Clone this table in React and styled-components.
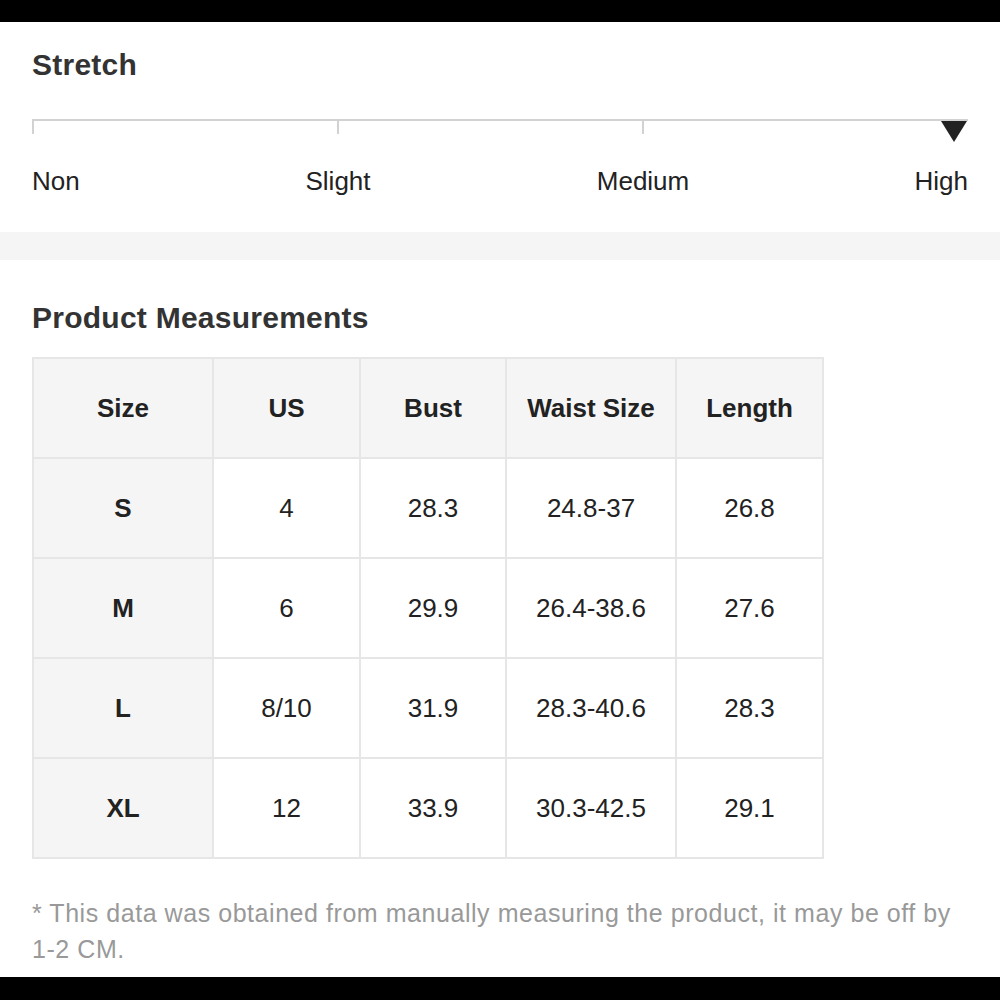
import React from 'react';
import styled, { createGlobalStyle } from 'styled-components';

const GlobalStyle = createGlobalStyle`
  body {
    margin: 0;
    background: #fff;
    font-family: "Liberation Sans", Arial, sans-serif;
  }
`;

const Page = styled.div`
  width: 1000px;
  height: 1000px;
  display: flex;
  flex-direction: column;
  overflow: hidden;
  background: #fff;
`;

const Bar = styled.div`
  height: ${(p) => p.$h}px;
  flex-shrink: 0;
  background: #000;
`;

const Section = styled.section`
  padding: ${(p) => p.$pad};
  flex: ${(p) => (p.$grow ? 1 : 'none')};
`;

const Title = styled.h2`
  margin: 0;
  font-size: 30px;
  line-height: 32px;
  font-weight: 700;
  letter-spacing: 0.25px;
  color: #333;
`;

const Scale = styled.div`
  margin-top: 38px;
  width: 936px;
  display: grid;
  grid-template-columns: 305px 305px 305px 21px;
  grid-template-rows: 15px 30px;
  row-gap: 32px;
`;

const TickCell = styled.div`
  border-top: 2px solid #d2d2d2;
  border-left: ${(p) => (p.$tick ? '2px solid #d2d2d2' : 'none')};
  display: flex;
  justify-content: flex-end;
`;

const Marker = styled.div`
  flex-shrink: 0;
  width: 0;
  height: 0;
  margin-right: 1px;
  border-left: 13px solid transparent;
  border-right: 13px solid transparent;
  border-top: 21px solid #222;
`;

const ScaleLabel = styled.div`
  grid-row: 2;
  grid-column: ${(p) => p.$col};
  justify-self: ${(p) => (p.$align === 'end' ? 'end' : 'start')};
  font-size: 26px;
  line-height: 30px;
  color: #222;
  white-space: nowrap;
  display: flex;
  justify-content: ${(p) => (p.$align === 'center' ? 'center' : 'flex-start')};
  width: ${(p) => (p.$align === 'center' ? '2px' : 'auto')};
`;

const Band = styled.div`
  height: 28px;
  flex-shrink: 0;
  background: #f5f5f5;
`;

const Table = styled.table`
  margin-top: 23px;
  border-collapse: collapse;
  table-layout: fixed;
  width: 790px;
  font-size: 26px;
  color: #222;
`;

const Cell = styled.td`
  height: 98px;
  padding: 0;
  text-align: center;
  border: 2px solid #e6e6e6;
  background: ${(p) => (p.$shade ? '#f5f5f5' : '#fff')};
  font-weight: ${(p) => (p.$bold ? 700 : 400)};
`;

const Note = styled.p`
  margin: 36px 0 0;
  width: 936px;
  font-size: 25px;
  line-height: 36px;
  letter-spacing: 0.55px;
  color: #999;
`;

const columns = [180, 147, 146, 170, 147];
const head = ['Size', 'US', 'Bust', 'Waist Size', 'Length'];
const rows = [
  ['S', '4', '28.3', '24.8-37', '26.8'],
  ['M', '6', '29.9', '26.4-38.6', '27.6'],
  ['L', '8/10', '31.9', '28.3-40.6', '28.3'],
  ['XL', '12', '33.9', '30.3-42.5', '29.1'],
];

export default function App() {
  return (
    <Page>
      <GlobalStyle />
      <Bar $h={22} />
      <Section $pad="27px 32px 36px 32px">
        <Title>Stretch</Title>
        <Scale>
          <TickCell $tick />
          <TickCell $tick />
          <TickCell $tick />
          <TickCell>
            <Marker />
          </TickCell>
          <ScaleLabel $col="1">Non</ScaleLabel>
          <ScaleLabel $col="2" $align="center">Slight</ScaleLabel>
          <ScaleLabel $col="3" $align="center">Medium</ScaleLabel>
          <ScaleLabel $col="3 / 5" $align="end">High</ScaleLabel>
        </Scale>
      </Section>
      <Band />
      <Section $pad="42px 32px 0 32px" $grow>
        <Title>Product Measurements</Title>
        <Table>
          <colgroup>
            {columns.map((w, i) => (
              <col key={i} style={{ width: w }} />
            ))}
          </colgroup>
          <tbody>
            <tr>
              {head.map((h) => (
                <Cell key={h} $shade $bold>
                  {h}
                </Cell>
              ))}
            </tr>
            {rows.map((r) => (
              <tr key={r[0]}>
                {r.map((v, i) => (
                  <Cell key={i} $shade={i === 0} $bold={i === 0}>
                    {v}
                  </Cell>
                ))}
              </tr>
            ))}
          </tbody>
        </Table>
        <Note>* This data was obtained from manually measuring the product, it may be off by 1-2 CM.</Note>
      </Section>
      <Bar $h={23} />
    </Page>
  );
}
